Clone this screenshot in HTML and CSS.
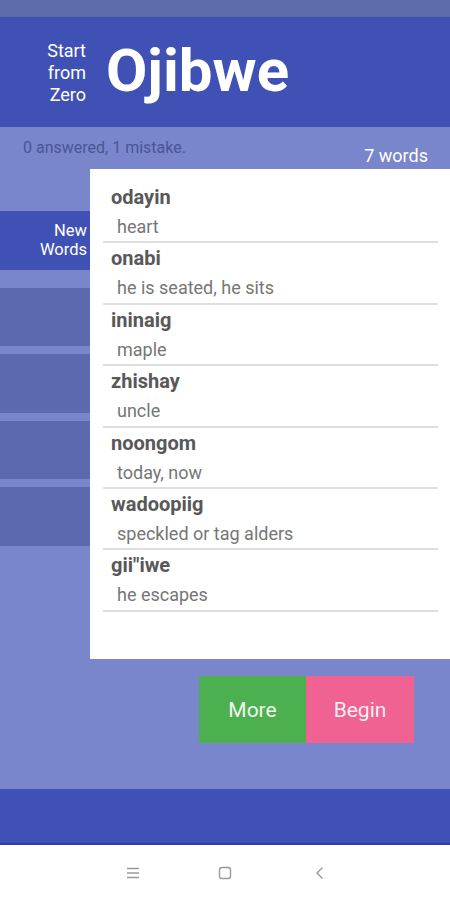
FILE: index.html
```html
<!DOCTYPE html>
<html>
<head>
<meta charset="utf-8">
<link rel="stylesheet" href="styles.css">
</head>
<body>
<div class="status"></div>
<header class="header">
  <div class="tagline">Start<br>from<br>Zero</div>
  <div class="title">Ojibwe</div>
</header>
<main class="main">
  <div class="stats">
    <span class="progress">0 answered, 1 mistake.</span>
    <span class="count">7 words</span>
  </div>
  <div class="content">
    <nav class="sidebar">
      <div class="tab active">New<br>Words</div>
      <div class="tab"></div>
      <div class="tab"></div>
      <div class="tab"></div>
      <div class="tab"></div>
    </nav>
    <section class="card">
      <div class="row"><div class="word">odayin</div><div class="meaning">heart</div></div>
      <div class="row"><div class="word">onabi</div><div class="meaning">he is seated, he sits</div></div>
      <div class="row"><div class="word">ininaig</div><div class="meaning">maple</div></div>
      <div class="row"><div class="word">zhishay</div><div class="meaning">uncle</div></div>
      <div class="row"><div class="word">noongom</div><div class="meaning">today, now</div></div>
      <div class="row"><div class="word">wadoopiig</div><div class="meaning">speckled or tag alders</div></div>
      <div class="row"><div class="word">gii"iwe</div><div class="meaning">he escapes</div></div>
    </section>
  </div>
  <div class="actions">
    <button class="btn more">More</button>
    <button class="btn begin">Begin</button>
  </div>
</main>
<footer class="footer"></footer>
<div class="navbar">
  <svg class="nav-icon" width="16" height="16" viewBox="0 0 16 16"><path d="M2 3.5h12M2 8h12M2 12.5h12" stroke="#9a9a9a" stroke-width="1.4" fill="none"/></svg>
  <svg class="nav-icon" width="16" height="16" viewBox="0 0 16 16"><rect x="2.5" y="2.5" width="11" height="11" rx="2.5" stroke="#9a9a9a" stroke-width="1.4" fill="none"/></svg>
  <svg class="nav-icon" width="16" height="16" viewBox="0 0 16 16"><path d="M10.5 2.5L5 8l5.5 5.5" stroke="#9a9a9a" stroke-width="1.4" fill="none"/></svg>
</div>
</body>
</html>
```

FILE: styles.css
```css
* { box-sizing: border-box; }
html, body { margin: 0; padding: 0; }
body {
  width: 450px;
  height: 900px;
  font-family: Roboto, "Noto Sans", "Liberation Sans", sans-serif;
  background: #fff;
  overflow: hidden;
}
.status { height: 17px; background: #5c6bab; }
.header {
  height: 110px;
  background: #3f51b5;
  display: flex;
  align-items: center;
  padding-left: 36px;
  color: #fff;
}
.tagline {
  width: 50px;
  text-align: right;
  font-size: 18px;
  line-height: 22px;
  margin-top: 2px;
}
.title {
  font-size: 60px;
  font-weight: 700;
  margin-left: 20px;
  line-height: 1;
  margin-top: -2px;
}
.main {
  height: 662px;
  background: #7986cb;
}
.stats {
  height: 42px;
  display: flex;
  justify-content: space-between;
  padding: 12px 22px 0 23px;
}
.progress {
  font-size: 16px;
  line-height: 18px;
  color: #4a5694;
}
.count {
  font-size: 18px;
  line-height: 20px;
  color: #fff;
  margin-top: 7px;
}
.content { display: flex; }
.sidebar {
  width: 90px;
  padding-top: 42px;
  display: flex;
  flex-direction: column;
  gap: 8px;
}
.tab {
  height: 58.5px;
  background: #5b6aae;
}
.tab.active {
  background: #3f51b5;
  color: #fff;
  text-align: right;
  font-size: 16.5px;
  line-height: 19px;
  padding: 10px 3px 0 0;
  margin-bottom: 10px;
}
.card {
  width: 360px;
  height: 490px;
  background: #fff;
  padding: 13px 12px 0 13px;
}
.row { border-bottom: 2px solid #dedede; }
.word {
  font-size: 20px;
  font-weight: 700;
  line-height: 30px;
  color: #585858;
  padding-left: 8px;
}
.meaning {
  font-size: 18px;
  line-height: 29.4px;
  color: #767676;
  padding-left: 14px;
}
.actions {
  display: flex;
  justify-content: flex-end;
  padding: 17px 36px 0 0;
}
.btn {
  border: none;
  height: 67px;
  font-family: inherit;
  font-size: 21px;
  color: #fff;
  padding: 0;
}
.more { width: 107px; background: #4caf50; color: #f1f8ee; }
.begin { width: 108px; background: #f06292; color: #fdeef3; }
.footer {
  height: 56px;
  background: #3f51b5;
  border-bottom: 2px solid #2a3ea8;
}
.navbar {
  height: 55px;
  display: flex;
  align-items: center;
  padding-left: 125px;
  gap: 0;
}
.nav-icon:nth-child(1) { margin-right: 76px; }
.nav-icon:nth-child(2) { margin-right: 79px; }
```
